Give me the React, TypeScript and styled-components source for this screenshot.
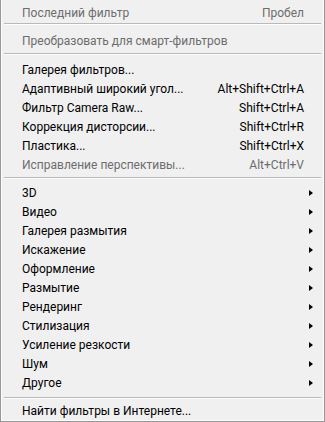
import React from "react";
import styled, { createGlobalStyle } from "styled-components";

const Global = createGlobalStyle`
  html, body { margin: 0; padding: 0; background: #f0f0f0; }
  body { font-family: "Segoe UI", Roboto, "Noto Sans", sans-serif; }
`;

const Menu = styled.div`
  box-sizing: border-box;
  width: 325px;
  height: 422px;
  background: #f0f0f0;
  border: 1px solid #979797;
  border-top: none;
  box-shadow: inset 1px 0 0 #fcfcfc, inset -1px 0 0 #fcfcfc, inset 0 -1px 0 #fcfcfc;
  display: flex;
  flex-direction: column;
  padding: 3px 2px 0 2px;
`;

const Row = styled.div<{ $disabled?: boolean }>`
  height: 19px;
  display: flex;
  align-items: center;
  padding: 0 18px 0 19px;
  font-size: 12px;
  color: ${(p) => (p.$disabled ? "#6d6d6d" : "#000")};
  white-space: nowrap;
`;

const Label = styled.span`
  flex: 1;
`;

const Shortcut = styled.span``;

const Arrow = styled.span`
  width: 0;
  height: 0;
  margin-right: -9px;
  border-left: 4px solid #000;
  border-top: 3.5px solid transparent;
  border-bottom: 3.5px solid transparent;
`;

const Separator = styled.div<{ $top: number; $bottom: number }>`
  margin: ${(p) => p.$top}px 1px ${(p) => p.$bottom}px 1px;
  height: 1px;
  background: #b9b9b9;
  border-bottom: 1px solid #fdfdfd;
`;

type Item = { label: string; shortcut?: string; disabled?: boolean; sub?: boolean };

const Item = ({ label, shortcut, disabled, sub }: Item) => (
  <Row $disabled={disabled}>
    <Label>{label}</Label>
    {shortcut && <Shortcut>{shortcut}</Shortcut>}
    {sub && <Arrow />}
  </Row>
);

const group3: Item[] = [
  { label: "Галерея фильтров..." },
  { label: "Адаптивный широкий угол...", shortcut: "Alt+Shift+Ctrl+A" },
  { label: "Фильтр Camera Raw...", shortcut: "Shift+Ctrl+A" },
  { label: "Коррекция дисторсии...", shortcut: "Shift+Ctrl+R" },
  { label: "Пластика...", shortcut: "Shift+Ctrl+X" },
  { label: "Исправление перспективы...", shortcut: "Alt+Ctrl+V", disabled: true },
];

const group4 = [
  "3D",
  "Видео",
  "Галерея размытия",
  "Искажение",
  "Оформление",
  "Размытие",
  "Рендеринг",
  "Стилизация",
  "Усиление резкости",
  "Шум",
  "Другое",
];

export default function App() {
  return (
    <>
      <Global />
      <Menu>
        <Item label="Последний фильтр" shortcut="Пробел" disabled />
        <Separator $top={1} $bottom={6} />
        <Item label="Преобразовать для смарт-фильтров" disabled />
        <Separator $top={3} $bottom={5} />
        {group3.map((it) => (
          <Item key={it.label} {...it} />
        ))}
        <Separator $top={3} $bottom={4} />
        {group4.map((l) => (
          <Item key={l} label={l} sub />
        ))}
        <Separator $top={5} $bottom={2} />
        <Item label="Найти фильтры в Интернете..." />
      </Menu>
    </>
  );
}
